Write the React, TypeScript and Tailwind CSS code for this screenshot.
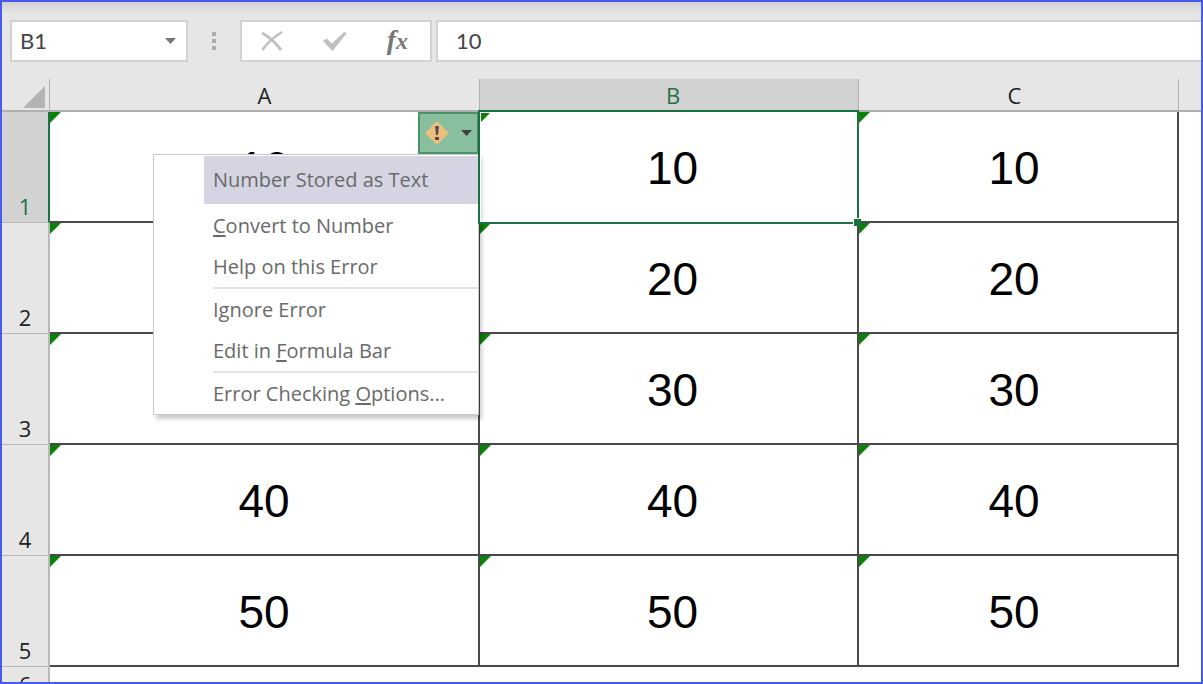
import React from "react";

const columns = [
  { name: "A", pad: "p-0" },
  { name: "B", pad: "p-0 pl-2" },
  { name: "C", pad: "p-0 pr-2" },
];

// null cells sit behind the open menu
const rows = [
  [10, 10, 10],
  [null, 20, 20],
  [null, 30, 30],
  [40, 40, 40],
  [50, 50, 50],
];

const Flag = () => (
  <svg className="absolute left-0 top-0" width="11" height="11" viewBox="0 0 11 11">
    <path d="M0 0h11L0 11z" fill="#0b800b" />
  </svg>
);

const FormulaBar = () => {
  return (
    <div className="flex h-[77px] items-center bg-linear-to-b from-[#d0d0d0] to-[#e6e6e6] to-15% pl-2 font-['Lato',sans-serif] text-[22px] text-[#444]">
      <div className="flex h-[42px] w-[178px] shrink-0 items-center border-2 border-[#d2d2d2] bg-white pr-2">
        <input
          aria-label="Name box"
          defaultValue="B1"
          className="w-full min-w-0 bg-transparent pl-2 outline-none"
        />
        <button aria-label="Open name list">
          <svg width="14" height="6" viewBox="0 0 14 6">
            <path d="M1 0h11L6.5 6z" fill="#777" />
          </svg>
        </button>
      </div>
      <svg className="mx-[22px] shrink-0" width="8" height="20" viewBox="0 0 8 20">
        <path d="M2 1h4v4H2zM2 8h4v4H2zM2 15h4v4H2z" fill="#acacac" />
      </svg>
      <div className="flex h-[42px] w-[192px] shrink-0 items-center justify-between border-2 border-[#d2d2d2] bg-white pr-[22px] pl-[18px]">
        <button aria-label="Cancel">
          <svg width="24" height="22" viewBox="0 0 24 22" fill="none" stroke="#c0c0c0">
            <path d="M2 3C8 6 15 12 21 20" strokeWidth="3" />
            <path d="M22 2C14 7 7 13 2.500 20" strokeWidth="2.500" />
          </svg>
        </button>
        <button aria-label="Enter">
          <svg width="24" height="22" viewBox="0 0 24 22">
            <path d="M0 11l3.500-2.500 5.500 5L21 2l3 1L9.500 21z" fill="#c0c0c0" />
          </svg>
        </button>
        <button
          aria-label="Insert function"
          className="font-['Liberation_Serif',serif] text-[28px] leading-8 font-bold text-[#777] italic"
        >
          f<span className="text-2xl">x</span>
        </button>
      </div>
      <input
        aria-label="Formula bar"
        defaultValue="10"
        className="ml-1 h-[42px] min-w-0 flex-1 border-2 border-r-0 border-[#d2d2d2] bg-white pl-[18px] outline-none"
      />
    </div>
  );
};

const MenuItem = ({ children }: { children: React.ReactNode }) => (
  <button role="menuitem" className="block h-[41px] w-full pl-[59px] text-left">
    {children}
  </button>
);

const ErrorMenu = () => {
  return (
    <div className="font-['Open_Sans',sans-serif] text-xl text-[#6a6a6a]">
      <button
        aria-label="Error options"
        className="absolute top-0 -right-px z-10 flex h-[42px] w-[61px] items-center justify-between border-2 border-[#4d9169] bg-[#88bf9f] pr-1 pl-1"
      >
        <svg width="26" height="26" viewBox="0 0 26 26">
          <path d="M13 1l12 12-12 12L1 13z" fill="#ecc07c" />
          <path d="M11 6h4l-1 9h-2zM11 17h4v3h-4z" fill="#505050" />
        </svg>
        <svg width="12" height="6" viewBox="0 0 12 6">
          <path d="M0 0h11L5.500 6z" fill="#444" />
        </svg>
      </button>
      <div
        role="menu"
        className="absolute top-[42px] -right-px z-10 w-[326px] border border-[#c8c8c8] bg-white pt-px shadow-[3px_4px_4px_rgba(0,0,0,0.2)]"
      >
        <button role="menuitem" className="mb-px ml-[50px] block h-12 w-[274px] bg-[#d5d4e2] pl-[9px] text-left">
          Number Stored as Text
        </button>
        <MenuItem>
          <u className="underline-offset-2">C</u>onvert to Number
        </MenuItem>
        <MenuItem>Help on this Error</MenuItem>
        <hr className="ml-[59px] border-t-2 border-[#e2e2e2]" />
        <MenuItem>Ignore Error</MenuItem>
        <MenuItem>
          Edit in <u className="underline-offset-2">F</u>ormula Bar
        </MenuItem>
        <hr className="ml-[59px] border-t-2 border-[#e2e2e2]" />
        <MenuItem>
          Error Checking <u className="underline-offset-2">O</u>ptions...
        </MenuItem>
      </div>
    </div>
  );
};

const Selection = () => (
  <div className="pointer-events-none absolute -top-[2px] -right-[2px] -bottom-[3px] -left-[2px] z-20 border-2 border-[#1b7143] shadow-[inset_0_0_0_1px_white]">
    <div className="absolute -right-1 -bottom-1 h-2 w-2 border-t border-l border-white bg-[#1b7143]" />
  </div>
);

const App = () => {
  return (
    <div className="h-screen overflow-hidden border-2 border-[#465af0] bg-white font-['Open_Sans',sans-serif]">
      <FormulaBar />
      <table className="w-full table-fixed border-separate border-spacing-0">
        <colgroup>
          <col className="w-12" />
          <col className="w-[430px]" />
          <col className="w-[379px]" />
          <col className="w-[320px]" />
          <col />
        </colgroup>
        <thead>
          <tr className="h-[33px] bg-[#e6e6e6] text-[22px] leading-7 text-[#222]">
            <th className="border-r border-b-2 border-[#b0b0b0] p-0">
              <svg className="mt-1 mr-1 ml-auto" width="22" height="22" viewBox="0 0 22 22">
                <path d="M22 0v22H0z" fill="#b4b4b4" />
              </svg>
            </th>
            {columns.map(({ name, pad }) => (
              <th
                key={name}
                className={
                  name === "B"
                    ? `border-r border-b-2 border-[#b0b0b0] bg-[#d2d2d2] font-normal text-[#217346] ${pad}`
                    : `border-r border-b-2 border-[#b0b0b0] font-normal ${pad}`
                }
              >
                {name}
              </th>
            ))}
            <th className="border-b-2 border-[#b0b0b0] p-0"></th>
          </tr>
        </thead>
        <tbody>
          {rows.map((values, i) => (
            <tr key={i} className="h-[111px]">
              <th
                className={
                  i === 0
                    ? "border-r-2 border-b border-r-[#1b7143] border-b-[#b8b8b8] bg-[#d2d2d2] p-0 align-bottom text-[22px] leading-8 font-normal text-[#217346]"
                    : "border-r-2 border-b border-[#b8b8b8] bg-[#e6e6e6] p-0 align-bottom text-[22px] leading-8 font-normal text-[#222]"
                }
              >
                {i + 1}
              </th>
              {columns.map(({ name, pad }, j) => (
                <td
                  key={name}
                  className={`relative border-r-2 border-b-2 border-[#4a4a4a] text-center font-['Liberation_Sans',sans-serif] text-[46px] leading-none text-black ${pad}`}
                >
                  <Flag />
                  <div className="pt-0.5">{values[j]}</div>
                  {i === 0 && name === "A" && <ErrorMenu />}
                  {i === 0 && name === "B" && <Selection />}
                </td>
              ))}
              <td></td>
            </tr>
          ))}
          <tr className="h-[34px]">
            <th className="border-r-2 border-[#b8b8b8] bg-[#e6e6e6] p-0 text-[22px] leading-8 font-normal text-[#222]">6</th>
            <td colSpan={4}></td>
          </tr>
        </tbody>
      </table>
    </div>
  );
};

export default App;
